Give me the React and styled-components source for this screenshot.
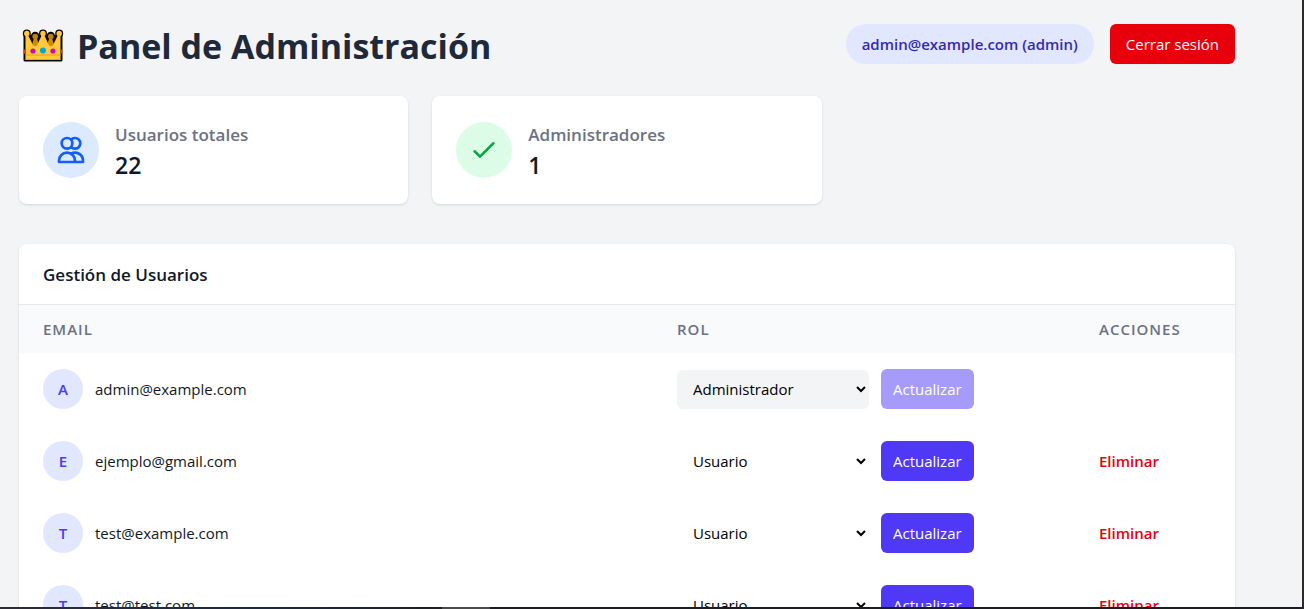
import React, { useState } from "react";
import styled, { createGlobalStyle } from "styled-components";

const GlobalStyle = createGlobalStyle`
  *, *::before, *::after { box-sizing: border-box; }
  body {
    margin: 0;
    background: #f3f4f6;
    color: #101828;
    font-family: "Open Sans", "Noto Sans", sans-serif;
    font-size: 15px;
    line-height: 24px;
  }
  h1, h2, p { margin: 0; }
  button, select { font: inherit; }
`;

const Screen = styled.div`
  height: 100vh;
  overflow: hidden;
  background: #f3f4f6;
  border-right: 2px solid #2b2b2b;
  display: flex;
  flex-direction: column;
`;

const Page = styled.main`
  flex: 1;
  min-height: 0;
  overflow: hidden;
  padding: 24px 67px 0 19px;
`;

const WindowEdge = styled.div`
  flex: none;
  height: 2px;
  background: linear-gradient(
    90deg,
    #2e2a38 0,
    #1c2a40 260px,
    #1f1f24 442px,
    #4a4a4a 442px,
    #4a4a4a 490px,
    #1d1c22 490px
  );
`;

const Header = styled.header`
  display: flex;
  justify-content: space-between;
  align-items: flex-start;
  margin-bottom: 28px;
`;

const Title = styled.h1`
  display: flex;
  align-items: center;
  gap: 12px;
  padding-left: 2px;
  color: #1e2939;
  font-size: 34px;
  font-weight: 700;
  line-height: 44px;
`;

const Session = styled.div`
  display: flex;
  align-items: center;
  gap: 16px;
`;

const UserPill = styled.span`
  padding: 8px 16px;
  border-radius: 20px;
  background: #e0e7ff;
  color: #372aac;
  font-weight: 600;
`;

const Button = styled.button`
  padding: 8px ${(p) => (p.$compact ? 12 : 16)}px;
  border: 0;
  border-radius: 6px;
  background: ${(p) => (p.$danger ? "#e7000b" : "#4f39f6")};
  color: #fff;
  line-height: 24px;
  cursor: pointer;
  &:disabled { opacity: 0.5; cursor: default; }
`;

const Stats = styled.section`
  display: grid;
  grid-template-columns: repeat(3, 1fr);
  gap: 24px;
  margin-bottom: 40px;
`;

const Card = styled.div`
  overflow: hidden;
  border-radius: 8px;
  background: #fff;
  box-shadow: 0 1px 3px rgba(0, 0, 0, 0.1), 0 1px 2px -1px rgba(0, 0, 0, 0.1);
`;

const StatCard = styled(Card)`
  display: flex;
  align-items: center;
  gap: 16px;
  padding: 24px;
`;

const StatIcon = styled.div`
  display: flex;
  padding: 12px;
  border-radius: 50%;
  background: ${(p) => p.$bg};
  color: ${(p) => p.$color};
`;

const StatLabel = styled.p`
  color: #6a7282;
  font-size: 17px;
  font-weight: 600;
  line-height: 30px;
`;

const StatValue = styled.p`
  font-size: 23px;
  font-weight: 600;
  line-height: 30px;
`;

const CardTitle = styled.h2`
  padding: 16px 24px 14px;
  border-bottom: 1px solid #e5e7eb;
  font-size: 17px;
  font-weight: 600;
  line-height: 30px;
`;

const Table = styled.table`
  width: 100%;
  border-collapse: collapse;
  table-layout: fixed;
`;

const Th = styled.th`
  width: ${(p) => p.$width || "auto"};
  padding: 12px 24px;
  background: #f9fafb;
  color: #6a7282;
  font-size: 15px;
  font-weight: 600;
  letter-spacing: 1px;
  text-align: left;
  text-transform: uppercase;
`;

const Td = styled.td`
  padding: 16px 24px;
`;

const Cell = styled.div`
  display: flex;
  align-items: center;
  gap: 12px;
  height: 40px;
`;

const Avatar = styled.span`
  display: flex;
  align-items: center;
  justify-content: center;
  width: 40px;
  height: 40px;
  border-radius: 50%;
  background: #e0e7ff;
  color: #4f39f6;
  font-weight: 600;
`;

const RoleSelect = styled.select`
  width: 192px;
  height: 39px;
  padding: 8px 12px;
  border: 0;
  border-radius: 6px;
  background-color: transparent;
  color: #000;
  line-height: 24px;
  &:disabled { background-color: #f3f4f6; color: #000; opacity: 1; }
`;

const DeleteButton = styled.button`
  padding: 0;
  border: 0;
  background: none;
  color: #e7000b;
  font-weight: 600;
  cursor: pointer;
`;

const CROWN_BODY = "M4 9h3.500l6.500 12 6.500-12h3l6.500 12 6.500-12H40v25H4z";
const CROWN_BACK = "M9 24 12.500 12h3.400l6.100 8 6.100-8h3.400L35 24z";

const CrownIcon = () => (
  <svg width="44" height="40" viewBox="0 0 44 40" aria-hidden="true">
    <g fill="#0b0700" stroke="#0b0700" strokeWidth="3" strokeLinejoin="round">
      <path d={CROWN_BODY} />
      <path d={CROWN_BACK} />
      <path d="M7 10 14 9l8 1 8-1 7 1v13H7z" strokeWidth="1" />
      <circle cx="5.800" cy="7.500" r="2.500" />
      <circle cx="22" cy="7.500" r="2.500" />
      <circle cx="38.200" cy="7.500" r="2.500" />
      <circle cx="14.200" cy="10" r="2.800" />
      <circle cx="29.800" cy="10" r="2.800" />
    </g>
    <path d="M9.500 24 13 12h2.600L20 24zM24 24l4.400-12H31l3.500 12z" fill="#d08a00" />
    <circle cx="14.200" cy="10.500" r="2.800" fill="#c07f00" />
    <circle cx="29.800" cy="10.500" r="2.800" fill="#c07f00" />
    <path
      d="M4.500 9h2.500l5 10q2.200 2.500 4.200 0L20.800 9h2.400l4.600 10q2 2.500 4.200 0L37 9h2.500v25h-35z"
      fill="#ffc83d"
    />
    <circle cx="5.800" cy="7.500" r="2.700" fill="#ffc83d" />
    <circle cx="22" cy="7.500" r="2.700" fill="#ffc83d" />
    <circle cx="38.200" cy="7.500" r="2.700" fill="#ffc83d" />
    <path d="M4.500 29h35M4.500 33.500h35" stroke="#e8a21a" strokeWidth="1" />
    <path d="M3.500 23.500v4M40.500 23.500v4" stroke="#f03a17" strokeWidth="1.500" />
    <circle cx="12" cy="25" r="2.600" fill="#c410b5" />
    <circle cx="22" cy="24.500" r="3" fill="#00a6d6" />
    <circle cx="32" cy="25" r="2.600" fill="#c410b5" />
  </svg>
);

const StrokeIcon = ({ d }) => (
  <svg
    width="32" height="32" viewBox="0 0 24 24" fill="none" stroke="currentColor"
    strokeWidth="2" strokeLinecap="round" strokeLinejoin="round" aria-hidden="true"
  >
    <path d={d} />
  </svg>
);

const USERS_PATH =
  "M12 4.354a4 4 0 110 5.292M15 21H3v-1a6 6 0 0112 0v1zm0 0h6v-1a6 6 0 00-9-5.197M13 7a4 4 0 11-8 0 4 4 0 018 0z";
const CHECK_PATH = "M5 13l4 4L19 7";

const users = [
  { email: "admin@example.com", role: "admin", locked: true },
  { email: "ejemplo@gmail.com", role: "user" },
  { email: "test@example.com", role: "user" },
  { email: "test@test.com", role: "user" },
];

function UserRow({ user }) {
  const [role, setRole] = useState(user.role);
  return (
    <tr>
      <Td>
        <Cell>
          <Avatar>{user.email[0].toUpperCase()}</Avatar>
          {user.email}
        </Cell>
      </Td>
      <Td>
        <Cell>
          <RoleSelect
            aria-label={`Rol de ${user.email}`}
            value={role}
            disabled={user.locked}
            onChange={(e) => setRole(e.target.value)}
          >
            <option value="user">Usuario</option>
            <option value="admin">Administrador</option>
          </RoleSelect>
          <Button $compact disabled={user.locked}>Actualizar</Button>
        </Cell>
      </Td>
      <Td>{!user.locked && <DeleteButton>Eliminar</DeleteButton>}</Td>
    </tr>
  );
}

export default function App() {
  return (
    <>
      <GlobalStyle />
      <Screen>
        <Page>
          <Header>
            <Title>
              <CrownIcon />
              Panel de Administración
            </Title>
            <Session>
              <UserPill>admin@example.com (admin)</UserPill>
              <Button $danger>Cerrar sesión</Button>
            </Session>
          </Header>
          <Stats>
            <StatCard>
              <StatIcon $bg="#dbeafe" $color="#155dfc">
                <StrokeIcon d={USERS_PATH} />
              </StatIcon>
              <div>
                <StatLabel>Usuarios totales</StatLabel>
                <StatValue>22</StatValue>
              </div>
            </StatCard>
            <StatCard>
              <StatIcon $bg="#dcfce7" $color="#00a63e">
                <StrokeIcon d={CHECK_PATH} />
              </StatIcon>
              <div>
                <StatLabel>Administradores</StatLabel>
                <StatValue>1</StatValue>
              </div>
            </StatCard>
          </Stats>
          <Card>
            <CardTitle>Gestión de Usuarios</CardTitle>
            <Table>
              <thead>
                <tr>
                  <Th>Email</Th>
                  <Th $width="422px">Rol</Th>
                  <Th $width="160px">Acciones</Th>
                </tr>
              </thead>
              <tbody>
                {users.map((user) => (
                  <UserRow key={user.email} user={user} />
                ))}
              </tbody>
            </Table>
          </Card>
        </Page>
        <WindowEdge />
      </Screen>
    </>
  );
}
